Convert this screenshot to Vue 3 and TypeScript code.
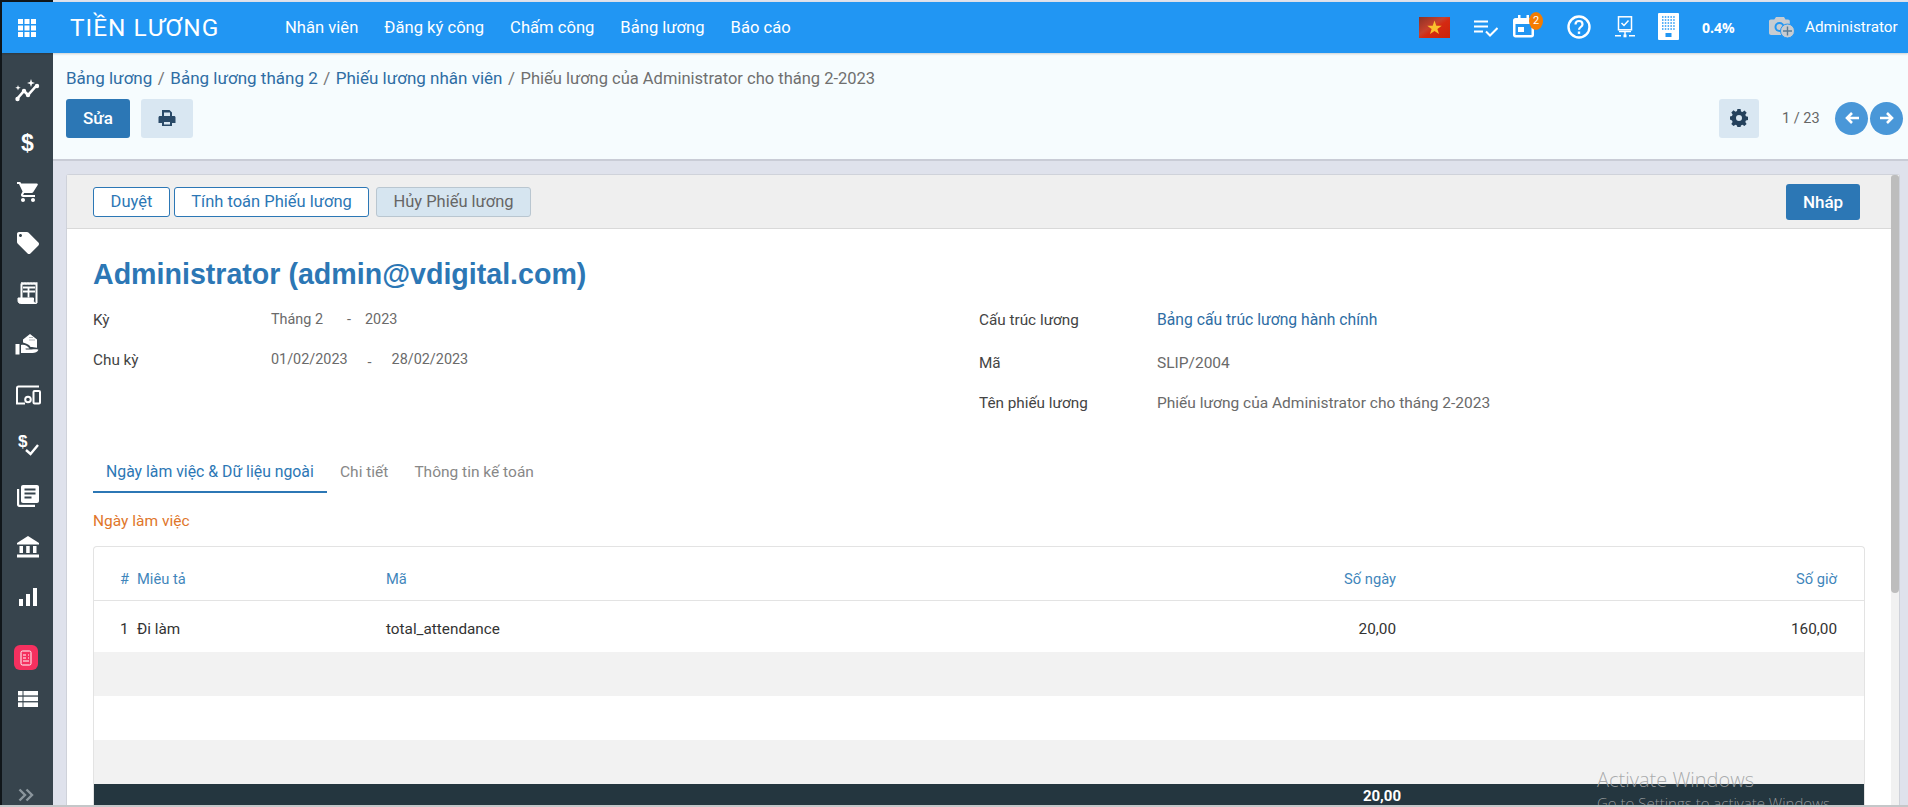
<script setup lang="ts">
const menus: string[] = ['Nhân viên', 'Đăng ký công', 'Chấm công', 'Bảng lương', 'Báo cáo']
const crumbs: string[] = ['Bảng lương', 'Bảng lương tháng 2', 'Phiếu lương nhân viên']
</script>

<template>
  <div class="root">
    <aside class="side">
      <div class="si">
        <svg width="26" height="24" viewBox="0 0 26 24"><path d="M2 20 L9 12 L13 16 L22 6" fill="none" stroke="#fff" stroke-width="2.6"/><circle cx="2.500" cy="20" r="2.200" fill="#fff"/><circle cx="9" cy="12" r="2.200" fill="#fff"/><circle cx="13" cy="16" r="2.200" fill="#fff"/><circle cx="22" cy="7" r="2.200" fill="#fff"/><path d="M16 0 L17 3 L20 4 L17 5 L16 8 L15 5 L12 4 L15 3Z M3 6 L3.700 8 L5.700 8.700 L3.700 9.400 L3 11.400 L2.300 9.400 L.3 8.700 L2.300 8Z" fill="#fff"/></svg>
      </div>
      <div class="si"><span class="dollar">$</span></div>
      <div class="si">
        <svg width="24" height="24" viewBox="0 0 24 24" fill="#fff"><path d="M7 18c-1.100 0-2 .9-2 2s.9 2 2 2 2-.9 2-2-.9-2-2-2zM1 2v2h2l3.600 7.590-1.350 2.450c-.16.28-.25.61-.25.96 0 1.100.9 2 2 2h12v-2H7.420a.25.25 0 0 1-.25-.25l.03-.12.9-1.630h7.450c.75 0 1.410-.41 1.750-1.030L21.700 4.960A1 1 0 0 0 20.860 3.500H5.210l-.94-1.500H1zm16 16c-1.100 0-2 .9-2 2s.9 2 2 2 2-.9 2-2-.9-2-2-2z"/></svg>
      </div>
      <div class="si">
        <svg width="24" height="24" viewBox="0 0 24 24" fill="#fff"><path d="M22.400 11.600 12.400 1.600C12 1.200 11.500 1 11 1H3C1.900 1 1 1.900 1 3v8c0 .55.22 1.050.59 1.420l10 10c.36.36.86.58 1.410.58s1.050-.22 1.410-.59l8-8c.37-.36.59-.86.59-1.410s-.23-1.060-.6-1.400zM4.500 6C3.670 6 3 5.330 3 4.500S3.670 3 4.500 3 6 3.670 6 4.500 5.330 6 4.500 6z"/></svg>
      </div>
      <div class="si">
        <svg width="22" height="24" viewBox="0 0 22 24" fill="none" stroke="#fff"><path d="M4.500 1.500v14.500M19.500 1.500V21" stroke-width="2"/><path d="M4 1h1.500v1H7V1h1.500v1H10V1h1.500v1H13V1h1.500v1H16V1h1.500v1H19V1h1.500" stroke-width="1.400"/><path d="M6 5.500h12M6 9.500h12M11.500 5.500v10" stroke-width="1.800"/><path d="M1 16h15.500v2.500c0 1.300.9 3 3 3H3.500C2 21.500 1 20.300 1 18.800z" fill="#fff" stroke-width="1"/></svg>
      </div>
      <div class="si">
        <svg width="25" height="24" viewBox="0 0 25 24" fill="#fff">
          <path d="M8 10.500V7.500L15 2l7 5.500v8.300c-2.500-.6-4.500-.9-6.500-.9-1-1.800-3-3.300-7.500-4.400z"/>
          <path d="M15 5v1M17 5v1M15 7.500v1M17 7.500v1M19 7.500v1" stroke="#37444d" stroke-width=".8"/>
          <rect x="0.500" y="12" width="4" height="10.500"/>
          <path d="M6 13c3.500-.8 6.500.8 8.500 3.500h-4l.3 1h5.700c2.200 0 4.500-.6 7 .2-1 2.200-3.500 3.300-6 3.300H6z"/>
        </svg>
      </div>
      <div class="si">
        <svg width="26" height="20" viewBox="0 0 26 20" fill="none" stroke="#fff" stroke-width="2"><path d="M2 18.500V3C2 2 2.500 1.500 3.500 1.500H24"/><path d="M1 18.500h9"/><circle cx="13" cy="14.500" r="2.800"/><rect x="18.500" y="6" width="6.500" height="12.500" rx="1"/></svg>
      </div>
      <div class="si">
        <svg width="24" height="24" viewBox="0 0 24 24"><text x="2" y="14" class="dsmall">$</text><path d="M10 17 L14.500 21 L22 12" fill="none" stroke="#fff" stroke-width="2.400"/></svg>
      </div>
      <div class="si">
        <svg width="24" height="24" viewBox="0 0 24 24" fill="#fff"><path d="M1 5h2.200v15.800H19V23H3.200C2 23 1 22 1 20.800z"/><path d="M7 1h14c1.100 0 2 .9 2 2v14c0 1.100-.9 2-2 2H7c-1.100 0-2-.9-2-2V3c0-1.100.9-2 2-2z"/><path d="M8.500 5.500h11M8.500 9.500h11M8.500 13.500h7" stroke="#37444d" stroke-width="2"/></svg>
      </div>
      <div class="si">
        <svg width="24" height="24" viewBox="0 0 24 24" fill="#fff"><path d="M12 1 L23 8 V9.500 H1 V8Z"/><rect x="3.500" y="11" width="3.500" height="7"/><rect x="10.200" y="11" width="3.500" height="7"/><rect x="17" y="11" width="3.500" height="7"/><rect x="1" y="19.500" width="22" height="3"/></svg>
      </div>
      <div class="si">
        <svg width="20" height="20" viewBox="0 0 20 20" fill="#fff"><rect x="1" y="12" width="4" height="7"/><rect x="8" y="7" width="4" height="12"/><rect x="15" y="1" width="4" height="18"/></svg>
      </div>
      <div class="si pink-wrap">
        <span class="pink">
          <svg width="12" height="16" viewBox="0 0 12 16" fill="none" stroke="#fff" stroke-width="1"><rect x="1" y="1" width="10" height="14" rx="1.500"/><path d="M3 5h3M3 8h3M3 11h6M8 5h1M8 8h1"/></svg>
        </span>
      </div>
      <div class="si tight">
        <svg width="20" height="16" viewBox="0 0 20 16" fill="#fff"><rect width="20" height="4.400"/><rect y="5.700" width="20" height="4.400"/><rect y="11.400" width="20" height="4.600"/><rect x="4.500" width="1" height="16" fill="#37444d"/></svg>
      </div>
      <div class="more">
        <svg width="16" height="14" viewBox="0 0 16 14" fill="none" stroke="#8b969d" stroke-width="2.400"><path d="M1.500 1.500 7 7 1.500 12.500M8.500 1.500 14 7 8.500 12.500"/></svg>
      </div>
    </aside>

    <div class="main">
      <header class="top">
        <svg class="apps" width="18" height="18" viewBox="0 0 18 18" fill="#fff">
          <rect width="5" height="5"/><rect x="6.500" width="5" height="5"/><rect x="13" width="5" height="5"/>
          <rect y="6.500" width="5" height="5"/><rect x="6.500" y="6.500" width="5" height="5"/><rect x="13" y="6.500" width="5" height="5"/>
          <rect y="13" width="5" height="5"/><rect x="6.500" y="13" width="5" height="5"/><rect x="13" y="13" width="5" height="5"/>
        </svg>
        <span class="brand">TIỀN LƯƠNG</span>
        <nav class="menu"><a v-for="m in menus" :key="m">{{ m }}</a></nav>
        <div class="tools">
          <svg class="flag" width="31" height="21" viewBox="0 0 31 21">
            <defs><linearGradient id="fg" x1="0" y1="0" x2="1" y2="1"><stop offset="0" stop-color="#8b3226"/><stop offset=".42" stop-color="#c8402c"/><stop offset=".55" stop-color="#d42a12"/><stop offset="1" stop-color="#cc2208"/></linearGradient></defs>
            <rect width="31" height="21" fill="url(#fg)"/>
            <path d="M15.500 3.500 17.300 8.700h5.400l-4.300 3.200 1.600 5.200-4.500-3.200-4.500 3.200 1.600-5.200-4.300-3.200h5.400z" fill="#fbc02d"/>
          </svg>
          <svg class="t-list" width="24" height="17" viewBox="0 0 24 17" fill="none" stroke="#fff"><path d="M0 1.500h14M0 6.500h14M0 11.500h9" stroke-width="2.200"/><path d="M12 11.500 16 15.500 23.500 8" stroke-width="2"/></svg>
          <span class="cal">
            <svg width="21" height="23" viewBox="0 0 21 23" fill="#fff"><path d="M5 0h2.500v3h6V0H16v3h2.500C20 3 21 4 21 5.500V20c0 1.500-1 2.500-2.500 2.500h-16C1 22.500 0 21.500 0 20V5.500C0 4 1 3 2.500 3H5zM2.500 9v11h16V9z"/><rect x="5" y="12" width="6" height="5"/></svg>
            <b class="badge">2</b>
          </span>
          <svg class="t-help" width="24" height="24" viewBox="0 0 24 24" fill="none" stroke="#fff" stroke-width="2.400"><circle cx="12" cy="12" r="10.500"/><path d="M8.500 9.500C8.500 7.300 10 6 12 6s3.500 1.300 3.500 3.200c0 2.800-3.500 2.800-3.500 5.600" stroke-width="2.200"/><rect x="10.800" y="16.500" width="2.400" height="2.400" fill="#fff" stroke="none"/></svg>
          <svg class="t-kiosk" width="20" height="22" viewBox="0 0 20 22" fill="none" stroke="#fff"><rect x="3.500" y=".8" width="13" height="13" stroke-width="1.500"/><path d="M6.500 7 9 9.500 13.500 4.500" stroke-width="1.500"/><path d="M4 15.500h12" stroke-width="1.500"/><path d="M10 15.500V19" stroke-width="1.500"/><path d="M0 19.800h6M14 19.800h6" stroke-width="1.600"/><rect x="8.500" y="18.500" width="3" height="2.800" fill="#fff" stroke="none"/></svg>
          <svg class="t-bld" width="21" height="27" viewBox="0 0 21 27">
            <rect width="21" height="27" rx="1" fill="#fff"/>
            <path d="M4 4h13M4 7h13M4 10h13M4 13h13M4 16h13" stroke="#2196f3" stroke-width="1.400" stroke-dasharray="1.500 1.300"/>
            <rect x="7.500" y="20" width="6" height="4" fill="#2196f3"/>
          </svg>
          <b class="pct">0.4%</b>
          <svg class="t-cam" width="27" height="24" viewBox="0 0 27 24">
            <path d="M7 2h8l1.500 2.500H19c1 0 1.800.8 1.800 1.800V20H2C1 20 0 19.200 0 18V6.300c0-1 .8-1.800 1.800-1.800h3.500z" fill="#c7ccd1"/>
            <circle cx="10.500" cy="12" r="5" fill="#2196f3"/>
            <circle cx="10.500" cy="12" r="3" fill="#c7ccd1"/>
            <circle cx="18.500" cy="16" r="7" fill="#c7ccd1" stroke="#2196f3" stroke-width="1"/>
            <path d="M18.500 11.500v9M14 16h9" stroke="#5a7c95" stroke-width="1.400"/>
          </svg>
          <span class="admin">Administrator</span>
        </div>
      </header>

      <div class="panel">
        <div class="crumbs">
          <template v-for="c in crumbs" :key="c"><a>{{ c }}</a><i>/</i></template>
          <span>Phiếu lương của Administrator cho tháng 2-2023</span>
        </div>
        <div class="panel-row">
          <button class="btn primary edit">Sửa</button>
          <button class="btn soft print">
            <svg width="18" height="18" viewBox="0 0 18 18" fill="#2a4a68"><path d="M4 1h7.500L14 3.500V7h-2V3.500H6V7H4z"/><path d="M2 7h14c1 0 1.500.7 1.500 1.500V14H14v3H4v-3H.5V8.500C.5 7.700 1 7 2 7zm4 6v2.500h6V13z" fill-rule="evenodd"/></svg>
          </button>
          <div class="grow"></div>
          <button class="btn soft gear">
            <svg width="18" height="18" viewBox="0 0 18 18" fill="#24415c"><path fill-rule="evenodd" d="M7.400 0h3.200l.4 2.400 1.500.6 2-1.400 2.200 2.200-1.400 2 .6 1.500 2.100.5v3.200l-2.100.4-.6 1.500 1.300 2-2.200 2.200-2-1.300-1.500.6-.4 2.100H7.400L7 16.400l-1.500-.6-2 1.300-2.200-2.200 1.300-2-.6-1.500L0 10.600V7.400l2-.4.600-1.500-1.300-2 2.200-2.200 2 1.400L7 2.100zM9 6a3 3 0 1 0 0 6 3 3 0 0 0 0-6z"/></svg>
          </button>
          <span class="pager">1 / 23</span>
          <span class="circle">
            <svg width="14" height="12" viewBox="0 0 14 12" fill="none" stroke="#fff" stroke-width="2.600"><path d="M14 6H2M7 1 2 6l5 5"/></svg>
          </span>
          <span class="circle second">
            <svg width="14" height="12" viewBox="0 0 14 12" fill="none" stroke="#fff" stroke-width="2.600"><path d="M0 6h12M7 1l5 5-5 5"/></svg>
          </span>
        </div>
      </div>

      <div class="content">
        <div class="card">
          <div class="sheet">
            <div class="status">
              <button class="btn outline">Duyệt</button>
              <button class="btn outline calc">Tính toán Phiếu lương</button>
              <button class="btn cancel">Hủy Phiếu lương</button>
              <div class="grow"></div>
              <button class="btn primary state">Nháp</button>
            </div>
            <div class="body">
              <h1>Administrator (admin@vdigital.com)</h1>
              <div class="cols">
                <div class="col">
                  <div class="f h40"><label>Kỳ</label><span class="v small">Tháng 2<em>-</em>2023</span></div>
                  <div class="f h40"><label>Chu kỳ</label><span class="v small">01/02/2023<em class="low">-</em>28/02/2023</span></div>
                </div>
                <div class="col">
                  <div class="f h44"><label>Cấu trúc lương</label><a class="v link">Bảng cấu trúc lương hành chính</a></div>
                  <div class="f h39"><label>Mã</label><span class="v">SLIP/2004</span></div>
                  <div class="f h39"><label>Tên phiếu lương</label><span class="v">Phiếu lương của Administrator cho tháng 2-2023</span></div>
                </div>
              </div>
              <div class="tabs">
                <a class="tab active">Ngày làm việc &amp; Dữ liệu ngoài</a>
                <a class="tab">Chi tiết</a>
                <a class="tab">Thông tin kế toán</a>
              </div>
              <div class="sect">Ngày làm việc</div>
              <div class="tbl">
                <div class="tr head">
                  <span class="c-n">#</span><span class="c-d">Miêu tả</span><span class="c-m">Mã</span>
                  <span class="c-s">Số ngày</span><span class="c-h">Số giờ</span>
                </div>
                <div class="tr first">
                  <span class="c-n">1</span><span class="c-d">Đi làm</span><span class="c-m">total_attendance</span>
                  <span class="c-s">20,00</span><span class="c-h">160,00</span>
                </div>
                <div class="tr grey"></div>
                <div class="tr"></div>
                <div class="tr grey"></div>
                <div class="tr foot"><span class="c-n"></span><span class="c-d"></span><span class="c-m"></span><span class="c-s">20,00</span><span class="c-h"></span></div>
              </div>
            </div>
          </div>
          <div class="scroll"><div class="thumb"></div></div>
        </div>
      </div>
    </div>

    <div class="wm">
      <div class="w1">Activate Windows</div>
      <div class="w2">Go to Settings to activate Windows.</div>
    </div>
    <div class="bottom-line"></div>
  </div>
</template>

<style>
html, body { margin: 0; height: 100%; overflow: hidden; background: #dfe2ec; }
</style>

<style scoped>
.root {
  position: relative; display: flex; width: 1908px; height: 807px; overflow: hidden;
  box-sizing: border-box; padding-left: 2px; background: #10161a;
  font-family: Roboto, "Liberation Sans", sans-serif; font-size: 15.300px; color: #333;
}
.side {
  width: 51px; flex: none; margin-top: 53px; background: #37444d;
  display: flex; flex-direction: column; padding-top: 13px; box-sizing: border-box;
}
.si { height: 50.6px; flex: none; display: flex; align-items: center; justify-content: center; }
.dollar { color: #fff; font: bold 23px "Liberation Sans", sans-serif; padding-top: 3px; }
.dsmall { fill: #fff; font: bold 17px "Liberation Sans", sans-serif; }
.pink-wrap { margin-top: 10px; height: 50px; }
.pink { width: 24px; height: 25px; border-radius: 6px; background: #f5305f; display: flex; align-items: center; justify-content: center; margin-left: -3px; }
.tight { margin-top: -4px; height: 40px; }
.more { margin-top: auto; height: 18px; padding-bottom: 1px; display: flex; justify-content: center; margin-left: -4px; }

.main { flex: 1; min-width: 0; display: flex; flex-direction: column; background: #dfe2ec; }
.top {
  margin-top: 2px; margin-left: -51px; height: 51px; flex: none; background: #2196f3;
  display: flex; align-items: center; color: #fff; position: relative; z-index: 2;
  box-shadow: 0 1px 2px rgba(0,0,0,.18);
}
.apps { margin-left: 16px; flex: none; }
.brand { margin-left: 34px; font-size: 24.400px; letter-spacing: 1px; width: 215px; flex: none; white-space: nowrap; }
.menu { display: flex; gap: 26px; font-size: 16.600px; white-space: nowrap; }
.tools { margin-left: auto; display: flex; align-items: center; height: 100%; position: relative; width: 490px; flex: none; }
.tools > * { position: absolute; }
.flag { left: 1px; top: 15px; }
.t-list { left: 56px; top: 18px; }
.cal { left: 95px; top: 13px; width: 30px; height: 26px; }
.badge { position: absolute; left: 16px; top: -3px; width: 14px; height: 18px; border-radius: 50%; background: #f57c00; color: #fff; font: 400 11px/17px Roboto, sans-serif; text-align: center; }
.t-help { left: 149px; top: 13px; }
.t-kiosk { left: 197px; top: 14px; }
.t-bld { left: 240px; top: 11px; }
.pct { left: 284px; top: 16px; font-size: 14px; font-family: "Open Sans", sans-serif; }
.t-cam { left: 351px; top: 13px; }
.admin { left: 387px; top: 16px; font-size: 15.300px; }

.panel {
  height: 108px; flex: none; box-sizing: border-box; background: #f6fcfe; border-bottom: 2px solid #c9ccd6;
  padding: 15px 5px 0 13px;
}
.crumbs { font-size: 17px; line-height: 20px; color: #2e6da4; white-space: nowrap; }
.crumbs i { font-style: normal; color: #777; margin: 0 5.500px; }
.crumbs span { color: #6f6f6f; font-size: 16.500px; }
.panel-row { display: flex; align-items: center; margin-top: 9px; height: 40px; }
.grow { flex: 1; }
.btn { box-sizing: border-box; border: 1px solid transparent; border-radius: 3px; font-family: inherit; font-size: 16.500px; padding: 0; display: flex; align-items: center; justify-content: center; }
.primary { background: #2c77b5; color: #fff; font-weight: 500; font-size: 17px; }
.soft { background: #d9e7f2; }
.edit { width: 64px; height: 39px; }
.print { width: 52px; height: 39px; margin-left: 11px; }
.gear { width: 40px; height: 39px; }
.pager { margin-left: 23px; width: 53px; font-size: 14.500px; color: #666; }
.circle { width: 33px; height: 33px; border-radius: 50%; background: #4997d8; display: flex; align-items: center; justify-content: center; }
.second { margin-left: 2px; }

.content { flex: 1; min-height: 0; padding: 13px 8px 0 13px; }
.card { height: 100%; display: flex; background: #fff; border: 1px solid #cfd2da; border-bottom: 0; border-radius: 3px 3px 0 0; box-sizing: border-box; }
.sheet { flex: 1; min-width: 0; }
.scroll { width: 8px; flex: none; background: #f1f1f1; }
.thumb { height: 418px; background: #bdbdbd; border-radius: 3px 3px 4px 4px; }
.status {
  height: 54px; box-sizing: border-box; background: #efefef; border-bottom: 1px solid #d9d9d9;
  display: flex; align-items: center; padding: 0 31px 0 26px;
}
.outline { height: 30px; width: 77px; background: #fff; border-color: #2c77b5; color: #2c77b5; margin-right: 4px; }
.calc { width: 195px; }
.cancel { height: 30px; width: 155px; margin-left: 3px; background: #d6e5f0; border-color: #b9c6d0; color: #666; }
.state { width: 74px; height: 36px; }
.body { padding: 0 0 0 26px; }
h1 { margin: 27px 0 0; font: bold 28.600px/36px "Liberation Sans", sans-serif; color: #2c77b5; }
.cols { display: flex; height: 161px; }
.col { width: 886px; padding-top: 18px; }
.f { display: flex; line-height: 20px; }
.h40 { height: 40px; }
.h44 { height: 43px; }
.h39 { height: 40px; }
.f label { width: 178px; flex: none; color: #444; }
.v { color: #6a6a6a; font-size: 15.500px; }
.v.small { font-size: 14.400px; }
.v em { font-style: normal; margin: 0 14px 0 24px; }
.v em.low { position: relative; top: 3px; margin: 0 20px; }
.link { color: #2e6da4; font-size: 15.700px; }
.tabs { display: flex; height: 40px; }
.tab { padding: 0 13px; line-height: 38px; height: 40px; box-sizing: border-box; color: #888; font-size: 15.500px; white-space: nowrap; }
.tab.active { color: #2c77b5; border-bottom: 2px solid #2c77b5; width: 234px; font-size: 15.800px; }
.sect { margin-top: 18px; line-height: 20px; font-size: 15.500px; color: #e0762a; }
.tbl { margin-top: 15px; border: 1px solid #e3e3e3; border-bottom: 0; border-radius: 4px 4px 0 0; width: 1772px; box-sizing: border-box; }
.tr { height: 44px; display: flex; align-items: center; padding: 0 27px 0 26px; }
.head { height: 54px; padding-top: 10px; border-bottom: 1px solid #e3e3e3; color: #3f86bb; box-sizing: border-box; font-size: 14.700px; }
.first { height: 51px; padding-top: 5px; box-sizing: border-box; }
.grey { background: #f2f2f2; }
.foot { background: #24363f; color: #fff; font-weight: 700; height: 24px; line-height: 24px; font-size: 15px; }
.c-n { width: 17px; flex: none; }
.c-d { width: 249px; flex: none; }
.c-m { width: 299px; flex: none; }
.c-s { width: 711px; flex: none; text-align: right; }
.c-h { flex: 1; text-align: right; }
.foot .c-s { position: relative; left: 5px; }

.wm { position: absolute; left: 1597px; top: 767px; font-family: "Open Sans", sans-serif; font-weight: 300; pointer-events: none; white-space: nowrap; color: rgba(160,162,164,.9); }
.w1 { font-size: 20px; line-height: 26px; }
.w2 { font-size: 15px; line-height: 18px; margin-top: 1px; }
.bottom-line { position: absolute; left: 0; right: 0; bottom: 0; height: 2px; background: #c4c7c9; }
</style>
